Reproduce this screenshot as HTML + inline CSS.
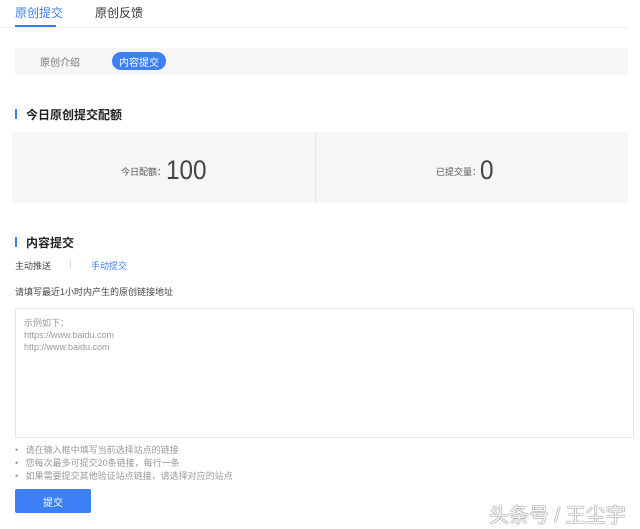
<!DOCTYPE html>
<html><head><meta charset="utf-8"><style>
*{margin:0;padding:0;box-sizing:border-box}
body{width:640px;height:529px;background:#fff;font-family:"Liberation Sans","Noto Sans CJK SC",sans-serif;color:#333;position:relative;overflow:hidden}
.a{position:absolute;white-space:nowrap}
</style></head><body>
<div class="a" style="left:15px;top:4px;font-size:12px;color:#3d7ff5">原创提交</div>
<div class="a" style="left:95px;top:4px;font-size:12px;color:#333">原创反馈</div>
<div class="a" style="left:0;top:27px;width:628px;height:1px;background:#f0f0f0"></div>
<div class="a" style="left:15px;top:25px;width:41px;height:2px;background:#3d7ff5"></div>
<div class="a" style="left:15px;top:48px;width:613px;height:27px;background:#f6f6f6"></div>
<div class="a" style="left:40px;top:54px;font-size:10px;color:#777">原创介绍</div>
<div class="a" style="left:112px;top:52px;width:54px;height:18px;border-radius:9px;background:#3d7ff5;color:#fff;font-size:10px;display:flex;align-items:center;justify-content:center">内容提交</div>
<div class="a" style="left:15px;top:109px;width:2px;height:10px;background:#3d7ff5"></div>
<div class="a" style="left:26px;top:106px;font-size:12px;font-weight:bold;color:#222">今日原创提交配额</div>
<div class="a" style="left:12px;top:132px;width:616px;height:71px;background:#f6f6f6"></div>
<div class="a" style="left:315px;top:132px;width:1px;height:71px;background:#e6e6e6"></div>
<div class="a" style="left:121px;top:165px;font-size:9px;color:#555">今日配额：</div>
<div class="a" style="left:166px;top:155px;font-size:27px;color:#444;line-height:30px;transform:scaleX(0.9);transform-origin:left">100</div>
<div class="a" style="left:436px;top:165px;font-size:9px;color:#555">已提交量：</div>
<div class="a" style="left:480px;top:155px;font-size:27px;color:#444;line-height:30px;transform:scaleX(0.9);transform-origin:left">0</div>
<div class="a" style="left:15px;top:237px;width:2px;height:10px;background:#3d7ff5"></div>
<div class="a" style="left:26px;top:234px;font-size:12px;font-weight:bold;color:#222">内容提交</div>
<div class="a" style="left:15px;top:259px;font-size:9px;color:#444">主动推送</div>
<div class="a" style="left:70px;top:260px;width:1px;height:9px;background:#ddd"></div>
<div class="a" style="left:91px;top:259px;font-size:9px;color:#3d7ff5">手动提交</div>
<div class="a" style="left:15px;top:285px;font-size:9px;color:#444">请填写最近1小时内产生的原创链接地址</div>
<div class="a" style="left:15px;top:308px;width:619px;height:130px;border:1px solid #e6e6e6"></div>
<div class="a" style="left:24px;top:317px;font-size:9px;color:#999;line-height:12px">示例如下：<br>https://www.baidu.com<br>http://www.baidu.com</div>
<div class="a" style="left:15px;top:444px;font-size:9px;color:#999;line-height:13px">•&nbsp;&nbsp; 请在输入框中填写当前选择站点的链接<br>•&nbsp;&nbsp; 您每次最多可提交20条链接，每行一条<br>•&nbsp;&nbsp; 如果需要提交其他验证站点链接，请选择对应的站点</div>
<div class="a" style="left:15px;top:489px;width:76px;height:24px;background:#3d7ff5;border-radius:2px;color:#fff;font-size:10px;display:flex;align-items:center;justify-content:center">提交</div>
<div class="a" style="left:489px;top:499px;font-size:20px;color:#fff;text-shadow:0 0 1px #444,0 0 1px #444">头条号 / 王尘宇</div>
</body></html>
